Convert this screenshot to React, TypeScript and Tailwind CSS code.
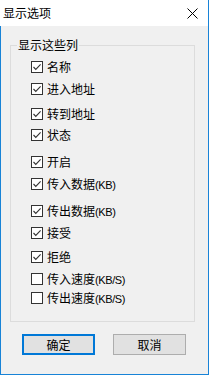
import React from "react";

const cjk = "font-['Noto_Sans_CJK_SC',sans-serif]";

type Row = { label: string; suffix?: string; checked: boolean; mt: string };

const rows: Row[] = [
  { label: "名称", checked: true, mt: "mt-[9px]" },
  { label: "进入地址", checked: true, mt: "mt-[10px]" },
  { label: "转到地址", checked: true, mt: "mt-[13px]" },
  { label: "状态", checked: true, mt: "mt-[9px]" },
  { label: "开启", checked: true, mt: "mt-[15px]" },
  { label: "传入数据", suffix: "(KB)", checked: true, mt: "mt-[10px]" },
  { label: "传出数据", suffix: "(KB)", checked: true, mt: "mt-[15px]" },
  { label: "接受", checked: true, mt: "mt-[10px]" },
  { label: "拒绝", checked: true, mt: "mt-[12px]" },
  { label: "传入速度", suffix: "(KB/S)", checked: false, mt: "mt-[10px]" },
  { label: "传出速度", suffix: "(KB/S)", checked: false, mt: "mt-[7px]" },
];

function Box({ checked }: { checked: boolean }) {
  return (
    <svg width="12" height="12" viewBox="0 0 12 12" className="shrink-0">
      <rect x="0.5" y="0.5" width="11" height="11" fill="#ffffff" stroke="#333333" strokeWidth="1" />
      {checked && (
        <path d="M2.5 6 L4.8 8.4 L9.6 3.4" fill="none" stroke="#333333" strokeWidth="1.1" />
      )}
    </svg>
  );
}

export default function App() {
  return (
    <div className={`w-[209px] h-[375px] flex flex-col ${cjk} text-[12px] text-black`}>
      <div className="h-[26px] bg-white flex items-center justify-between pl-[3px] pr-[10px] border-r border-[#1883d7]">
        <span className="leading-[14px]">显示选项</span>
        <svg width="11" height="11" viewBox="0 0 11 11">
          <path d="M0.5 0.5 L10.5 10.5 M10.5 0.5 L0.5 10.5" stroke="#000" strokeWidth="1" />
        </svg>
      </div>
      <div className="flex-1 bg-[#f0f0f0] border-l border-r border-b border-[#1883d7] flex flex-col">
        <fieldset className="ml-[9px] mt-[12px] w-[185px] h-[284px] border border-[#dcdcdc] pl-[20px]">
          <legend className="ml-[-14px] px-[1px] leading-[14px]">显示这些列</legend>
          <div className="flex flex-col">
            {rows.map((r) => (
              <div key={r.label} className={`flex items-center gap-[4px] h-[12px] ${r.mt}`}>
                <Box checked={r.checked} />
                <span className="leading-[12px] whitespace-nowrap">
                  {r.label}
                  {r.suffix && (
                    <span className="font-['Liberation_Sans',sans-serif] text-[11px] tracking-[-0.4px]">{r.suffix}</span>
                  )}
                </span>
              </div>
            ))}
          </div>
        </fieldset>
        <div className="flex pl-[21px] gap-[18px] mt-[12px]">
          <button className="w-[73px] h-[21px] bg-[#e1e1e1] border-2 border-[#0078d7] leading-[14px] text-[12px]">确定</button>
          <button className="w-[73px] h-[21px] bg-[#e1e1e1] border border-[#adadad] leading-[14px] text-[12px]">取消</button>
        </div>
      </div>
    </div>
  );
}
